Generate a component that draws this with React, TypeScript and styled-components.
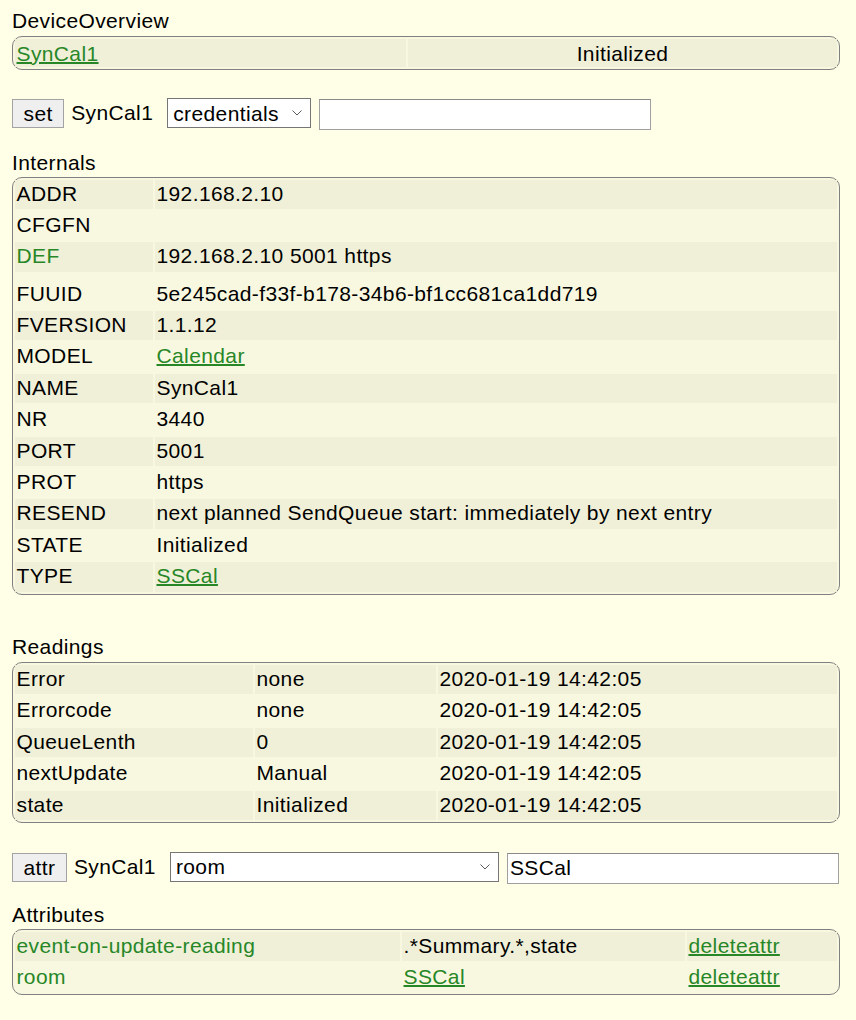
import React from 'react';
import styled, { createGlobalStyle } from 'styled-components';

const GlobalStyle = createGlobalStyle`
  html, body {
    margin: 0;
    padding: 0;
    background: #ffffe7;
  }
  body {
    font-family: 'Liberation Sans', Arial, sans-serif;
    font-size: 21px;
    letter-spacing: 0.38px;
    color: #000;
  }
`;

const Page = styled.div`
  width: 828px;
  padding: 9px 0 0 12px;
`;

const SectionTitle = styled.div<{ $top?: number }>`
  line-height: 24px;
  margin-top: ${({ $top }) => $top ?? 0}px;
`;

const Block = styled.table<{ $top?: number }>`
  width: 100%;
  margin-top: ${({ $top }) => $top ?? 2}px;
  border: 1px solid #808080;
  border-radius: 10px;
  border-spacing: 2px;
  background: #f8f8e0;
  table-layout: fixed;
`;

const Col = styled.col<{ $w?: number }>`
  width: ${({ $w }) => ($w ? `${$w}px` : 'auto')};
`;

const Row = styled.tr<{ $odd?: boolean }>`
  td {
    background: ${({ $odd }) => ($odd ? '#f0f0d8' : 'transparent')};
  }
`;

const Cell = styled.td<{ $center?: boolean; $compact?: boolean; $extraTop?: number }>`
  padding: ${({ $compact, $extraTop }) =>
    $compact ? '2.5px 1.5px 1.5px' : `${2 + ($extraTop ?? 0)}px 1.5px 3.4px`};
  line-height: 24px;
  white-space: nowrap;
  overflow: hidden;
  text-align: ${({ $center }) => ($center ? 'center' : 'left')};
`;

const Link = styled.a`
  color: #278727;
  text-decoration: underline;
  text-decoration-thickness: 2px;
  cursor: pointer;
`;

const GreenLabel = styled.span`
  color: #278727;
`;

const FormRow = styled.div<{ $top: number }>`
  display: flex;
  align-items: flex-start;
  margin-top: ${({ $top }) => $top}px;
`;

const CmdButton = styled.button`
  height: 29px;
  margin: 1px 7px 0 0;
  padding: 0 10.5px;
  font: inherit;
  letter-spacing: inherit;
  line-height: 27px;
  color: #000;
  background: #efefef;
  border: 1px solid #a3a3a3;
  border-radius: 0;
`;

const DeviceName = styled.span`
  line-height: 30px;
  margin-right: 14px;
`;

const SelectWrap = styled.div<{ $w: number }>`
  position: relative;
  width: ${({ $w }) => $w}px;
  height: 30px;
  margin-right: 8px;
`;

const Select = styled.select`
  appearance: none;
  width: 100%;
  height: 100%;
  padding: 0 0 0 5px;
  font: inherit;
  letter-spacing: inherit;
  color: #000;
  background: #fff;
  border: 1px solid #767676;
  border-radius: 0;
`;

const Chevron = styled.svg`
  position: absolute;
  right: 9px;
  top: 12px;
  pointer-events: none;
`;

const TextInput = styled.input`
  box-sizing: border-box;
  width: 332px;
  height: 31px;
  margin-top: 1px;
  padding: 0 2px;
  font: inherit;
  letter-spacing: inherit;
  color: #000;
  background: #fff;
  border: 1px solid #a0a0a0;
  border-top-color: #8a8a8a;
  border-radius: 0;
`;

type Internal = { name: string; value: React.ReactNode; def?: boolean };

const internals: Internal[] = [
  { name: 'ADDR', value: '192.168.2.10' },
  { name: 'CFGFN', value: '' },
  { name: 'DEF', value: '192.168.2.10 5001 https', def: true },
  { name: 'FUUID', value: '5e245cad-f33f-b178-34b6-bf1cc681ca1dd719' },
  { name: 'FVERSION', value: '1.1.12' },
  { name: 'MODEL', value: <Link>Calendar</Link> },
  { name: 'NAME', value: 'SynCal1' },
  { name: 'NR', value: '3440' },
  { name: 'PORT', value: '5001' },
  { name: 'PROT', value: 'https' },
  { name: 'RESEND', value: 'next planned SendQueue start: immediately by next entry' },
  { name: 'STATE', value: 'Initialized' },
  { name: 'TYPE', value: <Link>SSCal</Link> },
];

const readings = [
  ['Error', 'none'],
  ['Errorcode', 'none'],
  ['QueueLenth', '0'],
  ['nextUpdate', 'Manual'],
  ['state', 'Initialized'],
];

const attributes: { name: string; value: React.ReactNode }[] = [
  { name: 'event-on-update-reading', value: '.*Summary.*,state' },
  { name: 'room', value: <Link>SSCal</Link> },
];

const ChevronIcon: React.FC = () => (
  <Chevron width="10" height="6" viewBox="0 0 10 6">
    <path d="M0.5 0.5 L5 5 L9.5 0.5" fill="none" stroke="#5a5a5a" strokeWidth="1" />
  </Chevron>
);

type CommandProps = {
  cmd: string;
  top: number;
  selectWidth: number;
  option: string;
  value: string;
};

const CommandRow: React.FC<CommandProps> = ({ cmd, top, selectWidth, option, value }) => (
  <FormRow $top={top}>
    <CmdButton>{cmd}</CmdButton>
    <DeviceName>SynCal1</DeviceName>
    <SelectWrap $w={selectWidth}>
      <Select defaultValue={option}>
        <option value={option}>{option}</option>
      </Select>
      <ChevronIcon />
    </SelectWrap>
    <TextInput defaultValue={value} />
  </FormRow>
);

const App: React.FC = () => (
  <>
    <GlobalStyle />
    <Page>
      <SectionTitle>DeviceOverview</SectionTitle>
      <Block $top={3}>
        <colgroup>
          <Col $w={391} />
          <Col />
        </colgroup>
        <tbody>
          <Row $odd>
            <Cell $compact>
              <Link>SynCal1</Link>
            </Cell>
            <Cell $compact $center>
              Initialized
            </Cell>
          </Row>
        </tbody>
      </Block>

      <CommandRow cmd="set" top={28} selectWidth={144} option="credentials" value="" />

      <SectionTitle $top={21}>Internals</SectionTitle>
      <Block $top={1.5}>
        <colgroup>
          <Col $w={138} />
          <Col />
        </colgroup>
        <tbody>
          {internals.map((item, i) => (
            <Row key={item.name} $odd={i % 2 === 0}>
              <Cell $extraTop={item.name === 'FUUID' ? 6 : 0}>
                {item.def ? <GreenLabel>{item.name}</GreenLabel> : item.name}
              </Cell>
              <Cell $extraTop={item.name === 'FUUID' ? 6 : 0}>{item.value}</Cell>
            </Row>
          ))}
        </tbody>
      </Block>

      <SectionTitle $top={40}>Readings</SectionTitle>
      <Block $top={3.5}>
        <colgroup>
          <Col $w={238} />
          <Col $w={181} />
          <Col />
        </colgroup>
        <tbody>
          {readings.map(([name, value], i) => (
            <Row key={name} $odd={i % 2 === 0}>
              <Cell>{name}</Cell>
              <Cell>{value}</Cell>
              <Cell>2020-01-19 14:42:05</Cell>
            </Row>
          ))}
        </tbody>
      </Block>

      <CommandRow cmd="attr" top={28.5} selectWidth={329} option="room" value="SSCal" />

      <SectionTitle $top={19}>Attributes</SectionTitle>
      <Block $top={2}>
        <colgroup>
          <Col $w={385} />
          <Col $w={283} />
          <Col />
        </colgroup>
        <tbody>
          {attributes.map((attr, i) => (
            <Row key={attr.name} $odd={i % 2 === 0}>
              <Cell>
                <GreenLabel>{attr.name}</GreenLabel>
              </Cell>
              <Cell>{attr.value}</Cell>
              <Cell>
                <Link>deleteattr</Link>
              </Cell>
            </Row>
          ))}
        </tbody>
      </Block>
    </Page>
  </>
);

export default App;
